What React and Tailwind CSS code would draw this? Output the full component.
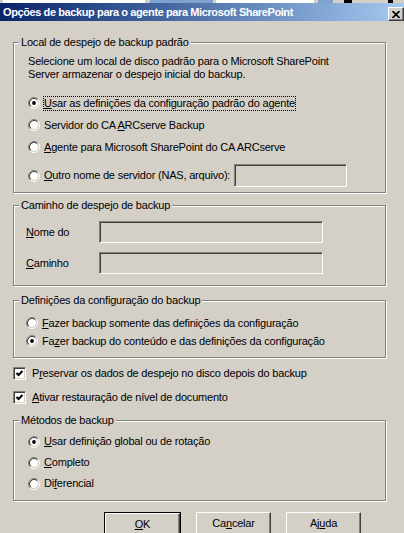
import React from "react";

function Radio({ checked }) {
  return (
    <svg width="12" height="12" viewBox="0 0 12 12" className="flex-none">
      <circle cx="6" cy="6" r="4" fill="#fff" />
      <path d="M2.11 9.89A5.5 5.5 0 0 1 9.89 2.11" stroke="#808080" fill="none" />
      <path d="M9.89 2.11A5.5 5.5 0 0 1 2.11 9.89" stroke="#fff" fill="none" />
      <path d="M2.82 9.18A4.5 4.5 0 0 1 9.18 2.82" stroke="#404040" fill="none" />
      <path d="M9.18 2.82A4.5 4.5 0 0 1 2.82 9.18" stroke="#d4d0c8" fill="none" />
      {checked && <circle cx="6" cy="6" r="1.9" fill="#000" />}
    </svg>
  );
}

function Check() {
  return (
    <div className="w-[13px] h-[13px] flex-none border border-t-[#808080] border-l-[#808080] border-r-white border-b-white bg-white shadow-[inset_1px_1px_0_#404040,inset_-1px_-1px_0_#d4d0c8] flex items-center justify-center">
      <svg width="11" height="11" viewBox="0 0 11 11">
        <path d="M2.5 5 L4.5 7 L8.5 3" stroke="#000" strokeWidth="2" fill="none" />
      </svg>
    </div>
  );
}

function RadioRow({ checked, focus, h, children }) {
  return (
    <div className={"flex items-center " + h}>
      <Radio checked={checked} />
      <span
        className={
          "ml-[3px] border leading-[13px] whitespace-nowrap " +
          (focus ? "border-dotted border-black" : "border-transparent")
        }
      >
        {children}
      </span>
    </div>
  );
}

function Group({ label, className, children }) {
  return (
    <div
      className={
        "relative w-[373px] border border-[#808080] shadow-[inset_1px_1px_0_#fff,1px_1px_0_#fff] " +
        className
      }
    >
      <span className="absolute left-[5px] -top-[7px] bg-[#d4d0c8] px-[2px] leading-[13px] whitespace-nowrap">
        {label}
      </span>
      {children}
    </div>
  );
}

function Field({ className }) {
  return (
    <div
      className={
        "flex-none border border-t-[#808080] border-l-[#808080] border-r-white border-b-white bg-[#d4d0c8] shadow-[inset_1px_1px_0_#404040,inset_-1px_-1px_0_#d4d0c8] " +
        className
      }
    />
  );
}

function Btn({ children }) {
  return (
    <div className="w-[75px] h-[23px] flex items-center justify-center border border-t-white border-l-white border-r-[#404040] border-b-[#404040] shadow-[inset_-1px_-1px_0_#808080] leading-[13px]">
      {children}
    </div>
  );
}

export default function App() {
  return (
    <div className="w-[404px] h-[533px] overflow-hidden bg-[#d4d0c8] text-black text-[11px] tracking-[-0.2px] font-['Liberation_Sans',Arial,sans-serif]">
      {/* strip of window behind */}
      <div className="flex h-[3px] bg-[#d4d0c8]">
        <div className="w-[3px]" />
        <div className="w-[142px] bg-white" />
        <div className="w-[5px]" />
        <div className="w-[63px] bg-[#7da2ce]" />
        <div className="w-[3px]" />
        <div className="w-[98px] bg-white" />
        <div className="w-[4px]" />
        <div className="w-[15px] bg-[#7da2ce]" />
        <div className="w-[11px]" />
        <div className="w-[8px] bg-black" />
        <div className="w-[36px]" />
        <div className="w-[5px] bg-black" />
      </div>
      {/* title bar */}
      <div className="relative h-[18px] flex items-center pl-[3px] bg-gradient-to-r from-[#0a246a] to-[#a6caf0]">
        <span className="text-white font-bold leading-[13px] tracking-[-0.4px] whitespace-nowrap">
          Opções de backup para o agente para Microsoft SharePoint
        </span>
        <div className="absolute right-0 top-[4px] w-[16px] h-[14px] bg-[#d4d0c8] border border-t-white border-l-white border-r-[#404040] border-b-[#404040] shadow-[inset_-1px_-1px_0_#808080] flex items-center justify-center">
          <svg width="8" height="7" viewBox="0 0 8 7">
            <path d="M0.5 0 L7.5 7 M7.5 0 L0.5 7" stroke="#000" strokeWidth="1.6" />
          </svg>
        </div>
      </div>

      <div className="pl-[13px]">
        {/* group 1 */}
        <Group label="Local de despejo de backup padrão" className="mt-[21px] pt-[12px] pl-[14px] pb-[5px]">
          <div className="leading-[13px] whitespace-nowrap">
            <div>Selecione um local de disco padrão para o Microsoft SharePoint</div>
            <div>Server armazenar o despejo inicial do backup.</div>
          </div>
          <div className="mt-[11px]">
            <RadioRow checked focus h="h-[22px]">
              <span className="underline">U</span>sar as definições da configuração padrão do agente
            </RadioRow>
            <RadioRow h="h-[22px]">
              Servidor do CA <span className="underline">A</span>RCserve Backup
            </RadioRow>
            <RadioRow h="h-[22px]">
              <span className="underline">A</span>gente para Microsoft SharePoint do CA ARCserve
            </RadioRow>
            <div className="flex items-center h-[23px] mt-[6px]">
              <Radio />
              <span className="flex-none ml-[3px] border border-transparent leading-[13px] whitespace-nowrap w-[191px]">
                <span className="underline">O</span>utro nome de servidor (NAS, arquivo):
              </span>
              <Field className="w-[113px] h-[23px]" />
            </div>
          </div>
        </Group>

        {/* group 2 */}
        <Group label="Caminho de despejo de backup" className="mt-[12px] pt-[15px] pl-[12px] pb-[11px]">
          <div className="flex items-center h-[22px]">
            <span className="w-[73px] leading-[13px]">
              <span className="underline">N</span>ome do
            </span>
            <Field className="w-[224px] h-[22px]" />
          </div>
          <div className="flex items-center h-[22px] mt-[9px]">
            <span className="w-[73px] leading-[13px]">
              <span className="underline">C</span>aminho
            </span>
            <Field className="w-[224px] h-[22px]" />
          </div>
        </Group>

        {/* group 3 */}
        <Group label="Definições da configuração do backup" className="mt-[14px] pt-[13px] pl-[12px] pb-[7px]">
          <RadioRow h="h-[18px]">
            <span className="underline">F</span>azer backup somente das definições da configuração
          </RadioRow>
          <RadioRow checked h="h-[18px]">
            Fa<span className="underline">z</span>er backup do conteúdo e das definições da configuração
          </RadioRow>
        </Group>

        {/* checkboxes */}
        <div className="flex items-center h-[20px] mt-[5px]">
          <Check />
          <span className="ml-[6px] leading-[13px] whitespace-nowrap">
            P<span className="underline">r</span>eservar os dados de despejo no disco depois do backup
          </span>
        </div>
        <div className="flex items-center h-[20px] mt-[4px]">
          <Check />
          <span className="ml-[6px] leading-[13px] whitespace-nowrap">
            <span className="underline">A</span>tivar restauração de nível de documento
          </span>
        </div>

        {/* group 4 */}
        <Group label="Métodos de backup" className="mt-[13px] pt-[10px] pl-[14px] pb-[6px]">
          <RadioRow checked h="h-[21px]">
            <span className="underline">U</span>sar definição global ou de rotação
          </RadioRow>
          <RadioRow h="h-[21px]">
            <span className="underline">C</span>ompleto
          </RadioRow>
          <RadioRow h="h-[21px]">
            Di<span className="underline">f</span>erencial
          </RadioRow>
        </Group>

        {/* buttons */}
        <div className="flex mt-[11px] ml-[91px] gap-[15px]">
          <div className="border border-black">
            <Btn>
              <span className="underline">O</span>K
            </Btn>
          </div>
          <Btn>
            Ca<span className="underline">n</span>celar
          </Btn>
          <Btn>
            Aj<span className="underline">u</span>da
          </Btn>
        </div>
      </div>
    </div>
  );
}
